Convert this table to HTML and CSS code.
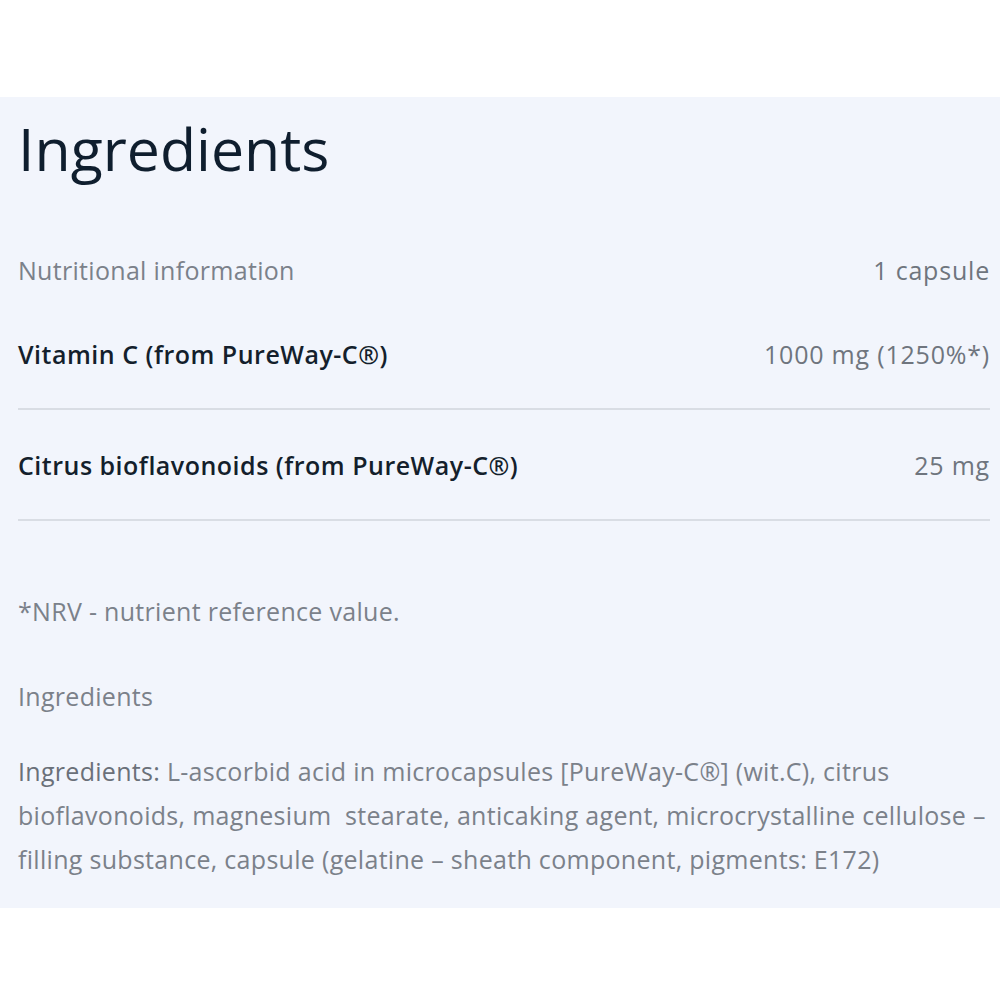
FILE: index.html
```html
<!DOCTYPE html>
<html>
<head>
  <meta charset="UTF-8">
  <title>Ingredients</title>
  <link rel="stylesheet" href="styles.css">
</head>
<body>

<div class="panel">
	<h1 class="title">Ingredients</h1>

	<table class="nutrition">
		<tr class="head">
			<td>Nutritional information</td>
			<td class="amount">1 capsule</td>
		</tr>
		<tr class="item">
			<td>Vitamin C (from PureWay-C®)</td>
			<td class="amount">1000 mg (1250%*)</td>
		</tr>
		<tr class="item">
			<td>Citrus bioflavonoids (from PureWay-C®)</td>
			<td class="amount">25 mg</td>
		</tr>
	</table>

	<p class="note nrv">*NRV - nutrient reference value.</p>
	<p class="note">Ingredients</p>
	<p class="composition"><span class="label">Ingredients:</span> L-ascorbid acid in microcapsules [PureWay-C®] (wit.C), citrus bioflavonoids, magnesium&nbsp; stearate, anticaking agent, microcrystalline cellulose – filling substance, capsule (gelatine – sheath component, pigments: E172)</p>
</div>

</body>
</html>
```

FILE: styles.css
```css
body{
	margin: 0;
	background: #fff;
	font-family: "Open Sans", "Noto Sans", sans-serif;
	letter-spacing: 0.3px;
}
.panel{
	margin-top: 97px;
	background: #f2f5fc;
	padding: 10px 10px 24px 18px;
	height: 777px;
}
.title{
	margin: 0;
	font-size: 59px;
	font-weight: 400;
	color: #0f1e2e;
	line-height: 82px;
	letter-spacing: 0;
}
.nutrition{
	width: 100%;
	border-collapse: collapse;
	margin-top: 52px;
	font-size: 25px;
}
.nutrition td{
	padding: 0;
}
.head td{
	color: #7b818a;
	height: 58px;
}
.item td{
	height: 109px;
	border-bottom: 2px solid #d9dde4;
	color: #141f2c;
	font-weight: 600;
	letter-spacing: 0.5px;
}
.nutrition .amount{
	text-align: right;
	color: #6f757e;
	font-weight: 400;
	letter-spacing: 0.8px;
}
.note{
	margin: 0;
	color: #7b818a;
	font-size: 25px;
	line-height: 85px;
}
.nrv{
	margin-top: 48px;
}
.composition{
	margin: 0;
	margin-top: 10px;
	color: #7b818a;
	font-size: 25px;
	line-height: 44px;
}
.label{
	color: #6a7079;
}
```
